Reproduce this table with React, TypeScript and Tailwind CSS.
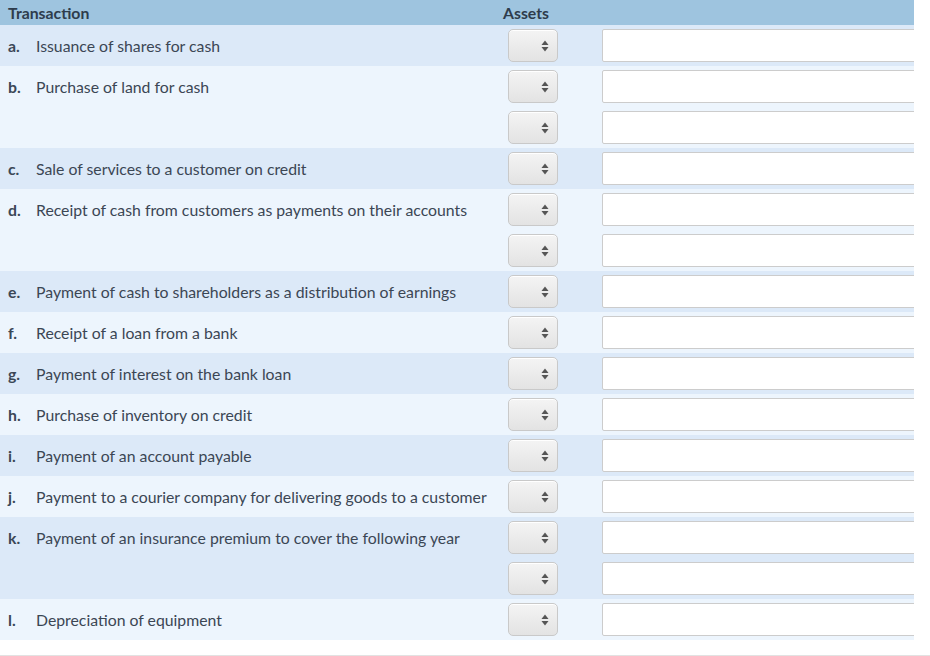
const rows: { key: string; text: string; extra?: number }[] = [
  { key: "a.", text: "Issuance of shares for cash" },
  { key: "b.", text: "Purchase of land for cash", extra: 1 },
  { key: "c.", text: "Sale of services to a customer on credit" },
  { key: "d.", text: "Receipt of cash from customers as payments on their accounts", extra: 1 },
  { key: "e.", text: "Payment of cash to shareholders as a distribution of earnings" },
  { key: "f.", text: "Receipt of a loan from a bank" },
  { key: "g.", text: "Payment of interest on the bank loan" },
  { key: "h.", text: "Purchase of inventory on credit" },
  { key: "i.", text: "Payment of an account payable" },
  { key: "j.", text: "Payment to a courier company for delivering goods to a customer" },
  { key: "k.", text: "Payment of an insurance premium to cover the following year", extra: 1 },
  { key: "l.", text: "Depreciation of equipment" },
];

function Select() {
  return (
    <div className="w-[50px] h-[33px] shrink-0 rounded-[5px] border border-[#c9c9c9] bg-gradient-to-b from-[#f4f4f4] to-[#e3e3e3] flex items-center justify-end pr-[8px] shadow-[inset_0_1px_0_#fff]">
      <svg width="8" height="12" viewBox="0 0 8 12">
        <path d="M4 0.5 L7.5 5 L0.5 5 Z" fill="#555" />
        <path d="M4 11.5 L7.5 7 L0.5 7 Z" fill="#555" />
      </svg>
    </div>
  );
}

function Line({ label, text, dark }: { label?: string; text?: string; dark: boolean }) {
  return (
    <div className={`flex items-center h-[41px] ${dark ? "bg-[#dce9f8]" : "bg-[#edf5fd]"}`}>
      <div className="w-[508px] shrink-0 flex items-center pl-[8px] pt-[1px]">
        {label && <span className="w-[28px] shrink-0 font-bold text-[#3b4756]">{label}</span>}
        {text && <span className="whitespace-nowrap">{text}</span>}
      </div>
      <Select />
      <div className="ml-[44px] w-[340px] h-[33px] shrink-0 bg-white border border-[#cccccc] rounded-[2px]" />
    </div>
  );
}

export default function App() {
  return (
    <div className="w-[930px] h-[656px] bg-white border-b border-[#e2e2e2] font-['Lato',sans-serif] text-[15.8px] text-[#3b4654]">
      <div className="w-[914px] overflow-hidden">
        <div className="flex items-center h-[25px] bg-[#9ec4df] font-bold text-[#2e3c4c]">
          <div className="w-[503px] shrink-0 pl-[8px]">Transaction</div>
          <div>Assets</div>
        </div>
        {rows.map((r, i) => {
          const dark = i % 2 === 0;
          return (
            <div key={r.key}>
              <Line label={r.key} text={r.text} dark={dark} />
              {r.extra ? <Line dark={dark} /> : null}
            </div>
          );
        })}
      </div>
    </div>
  );
}
